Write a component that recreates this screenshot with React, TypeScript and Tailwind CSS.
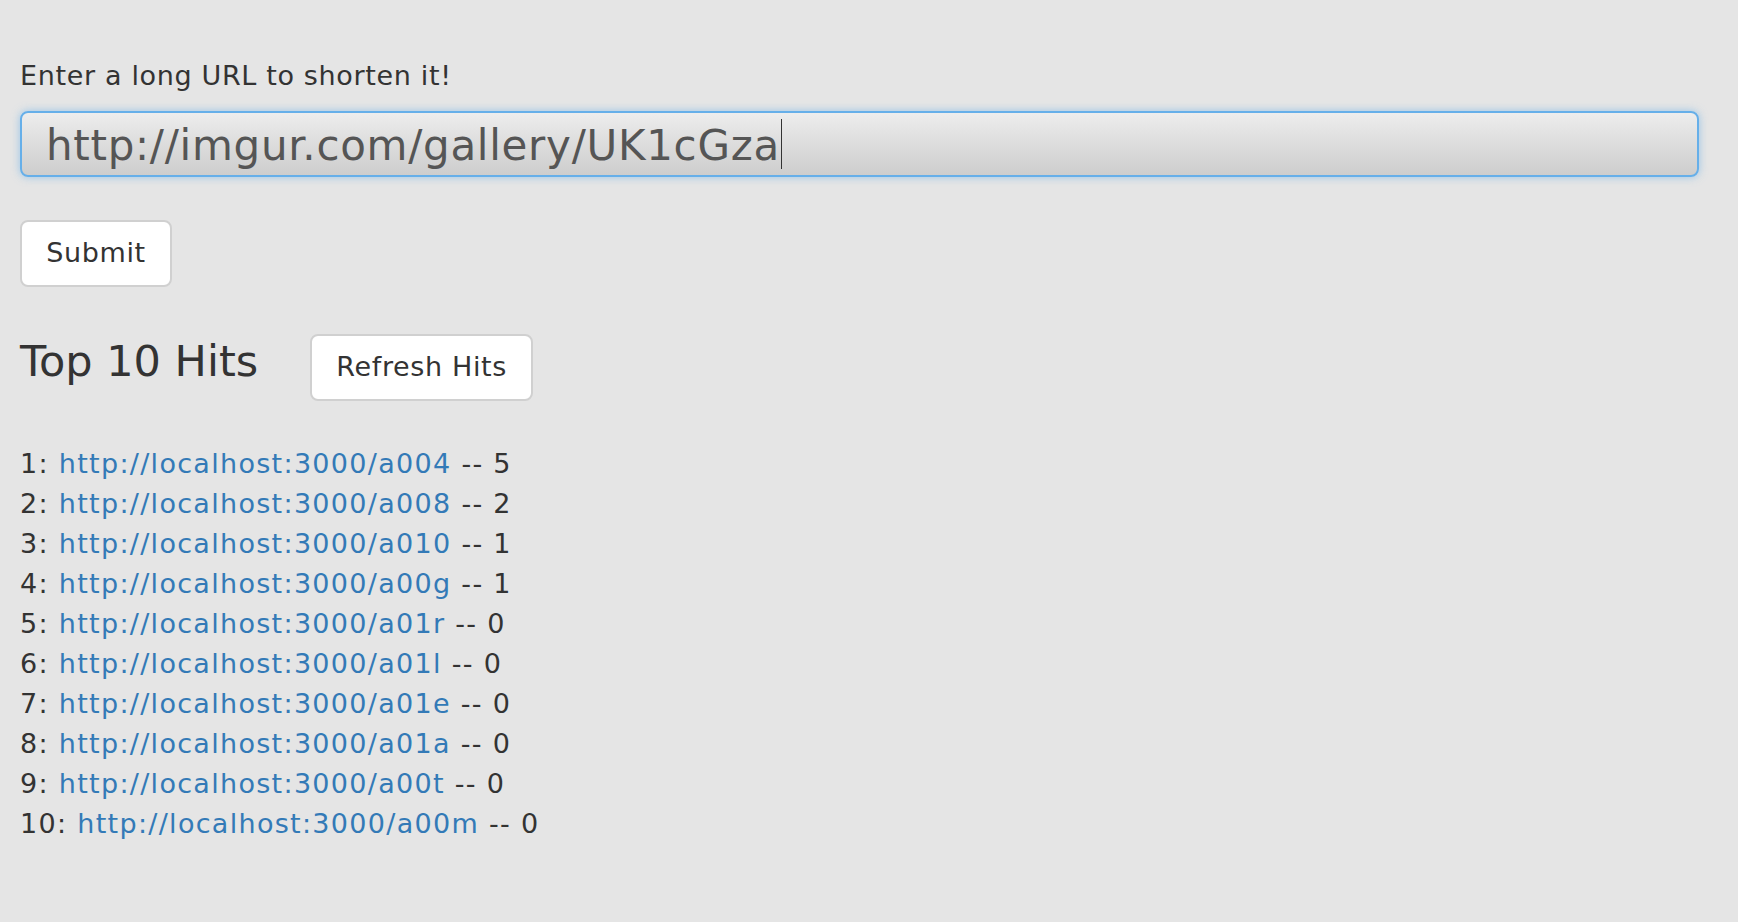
import React from 'react';

const hits = [
  { code: 'a004', count: 5 },
  { code: 'a008', count: 2 },
  { code: 'a010', count: 1 },
  { code: 'a00g', count: 1 },
  { code: 'a01r', count: 0 },
  { code: 'a01l', count: 0 },
  { code: 'a01e', count: 0 },
  { code: 'a01a', count: 0 },
  { code: 'a00t', count: 0 },
  { code: 'a00m', count: 0 },
];

const App: React.FC = () => {
  return (
    <div className="min-h-screen bg-[#e5e5e5] text-[#333] font-['DejaVu_Sans',Verdana,sans-serif] pl-[20px] pr-[39px] pt-[59px]">
      {/* URL form */}
      <div className="text-[27px] leading-[34px] tracking-[0.65px]">Enter a long URL to shorten it!</div>
      <div className="mt-[18px] h-[66px] w-full rounded-[8px] border-2 border-[#66afe9] bg-gradient-to-b from-[#ededed] to-[#cdcdcd] shadow-[0_0_8px_rgba(102,175,233,0.6)] flex items-center pl-[24px] pt-[3px]">
        <span className="text-[42px] leading-none tracking-[0.7px] text-[#555]">http://imgur.com/gallery/UK1cGza</span>
        <span className="ml-[1px] -mt-[3px] w-[1.5px] h-[50px] bg-[#333]" />
      </div>
      <button className="mt-[43px] h-[67px] w-[152px] rounded-[8px] border-2 border-[#d0d0d0] bg-white text-[27px] tracking-[0.6px] text-[#333]">
        Submit
      </button>

      {/* Hits */}
      <div className="mt-[47px] flex items-start gap-[52px]">
        <h3 className="mt-[6px] text-[43px] leading-[43px]">Top 10 Hits</h3>
        <button className="h-[67px] w-[223px] rounded-[8px] border-2 border-[#d0d0d0] bg-white text-[27px] tracking-[0.65px] text-[#333]">
          Refresh Hits
        </button>
      </div>
      <ol className="mt-[43px] text-[27px] leading-[40px] tracking-[1.3px]">
        {hits.map((h, i) => (
          <li key={h.code}>
            {i + 1}:{' '}
            <a href="#" className="text-[#337ab7]">
              http://localhost:3000/{h.code}
            </a>{' '}
            -- {h.count}
          </li>
        ))}
      </ol>
    </div>
  );
};

export default App;
